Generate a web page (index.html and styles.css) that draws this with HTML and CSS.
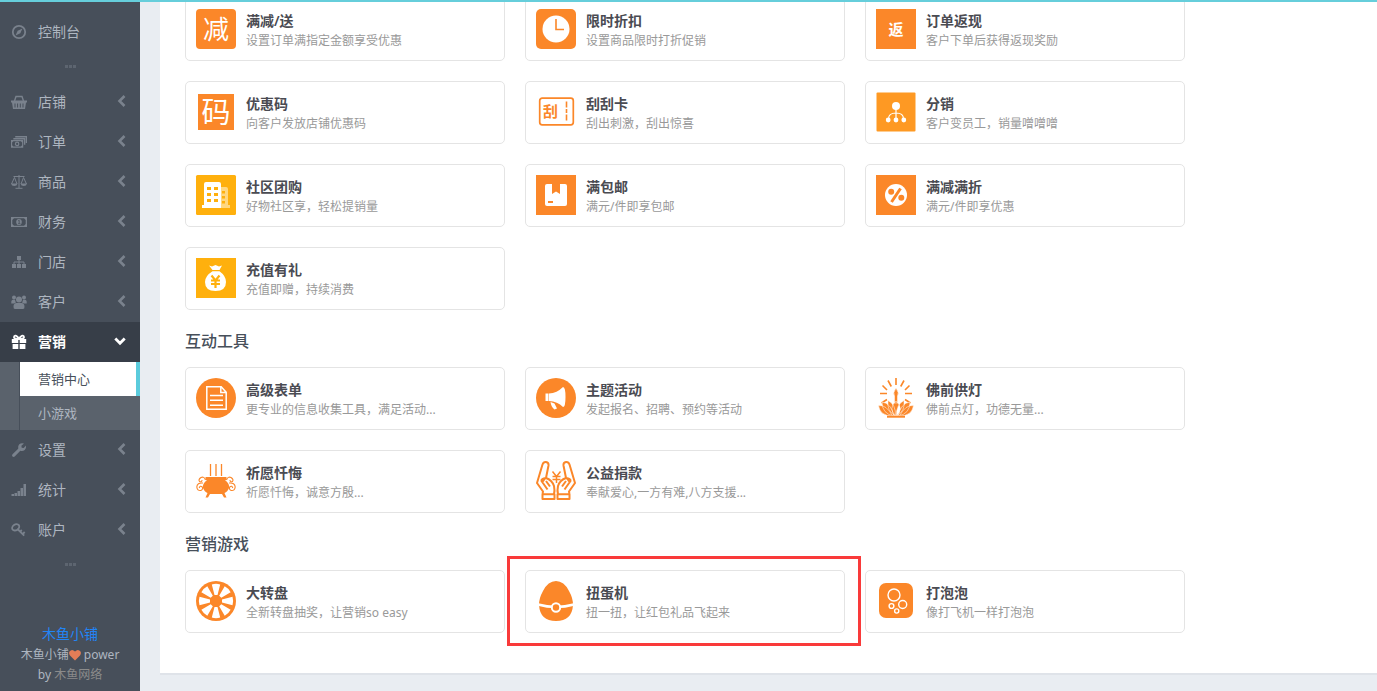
FILE: index.html
```html
<!DOCTYPE html>
<html lang="zh-CN">
<head>
<meta charset="utf-8">
<title>营销中心</title>
<meta name="viewport" content="width=device-width, initial-scale=1">
<link rel="stylesheet" href="styles.css">
</head>
<body>
<svg class="defs" aria-hidden="true">
  <symbol id="chevron-left" viewBox="0 0 12 14"><path d="M10.500 2 5.500 7l5 5" fill="none" stroke="currentColor" stroke-width="2.600"/></symbol>
  <symbol id="chevron-down" viewBox="0 0 12 14"><path d="M1.300 4.500 6 9.200l4.700-4.700" fill="none" stroke="currentColor" stroke-width="2.800"/></symbol>
</svg>
<div class="topbar"></div>
<div class="layout">
  <aside class="sidebar">
    <nav>
      <a class="nav-item" href="#"><svg class="nav-icon" viewBox="0 0 16 16"><circle cx="8" cy="8" r="6.200" fill="none" stroke="currentColor" stroke-width="1.800"/><path d="M11.500 4.500 9.300 9.300 4.500 11.500 6.700 6.700z" fill="currentColor"/></svg><span>控制台</span></a>
      <div class="divider"><i></i><i></i><i></i></div>
      <a class="nav-item" href="#"><svg class="nav-icon" viewBox="0 0 16 16"><path d="M3.500 7 5 2.500h6L12.500 7" fill="none" stroke="currentColor" stroke-width="1.400"/><path fill="currentColor" fill-rule="evenodd" d="M0 6.500h16v2h-1l-1 6.500H2L1 8.500H0zM3.500 9.500v4h1v-4zm2.600 0v4h1v-4zm2.700 0v4h1v-4zm2.700 0v4h1v-4z"/></svg><span>店铺</span><svg class="arrow"><use href="#chevron-left"/></svg></a>
      <a class="nav-item" href="#"><svg class="nav-icon" viewBox="0 0 17 16"><path d="M2.500 4.500H14.500V11M4.500 2.500h12V9" fill="none" stroke="currentColor" stroke-width="1.500"/><path fill="currentColor" fill-rule="evenodd" d="M0 6h13v8H0zM2.500 7.200 1.200 8.500v3L2.500 12.800h8l1.300-1.300v-3l-1.300-1.300z"/><circle cx="6.500" cy="10" r="1.800" fill="none" stroke="currentColor" stroke-width="1.300"/></svg><span>订单</span><svg class="arrow"><use href="#chevron-left"/></svg></a>
      <a class="nav-item" href="#"><svg class="nav-icon" viewBox="0 0 16 16"><path d="M8 1v13M2.500 2.500h11M4.500 14.300h7M.5 10 3.500 3.500 6 10M10 10l2.500-6.500 3 6.500" fill="none" stroke="currentColor"/><path d="M0 9.500h6.500Q6 12 3.250 12T0 9.500M9.500 9.500H16q-.5 2.500-3.250 2.500T9.500 9.500" fill="currentColor"/></svg><span>商品</span><svg class="arrow"><use href="#chevron-left"/></svg></a>
      <a class="nav-item" href="#"><svg class="nav-icon" viewBox="0 0 16 16"><path fill="currentColor" fill-rule="evenodd" d="M0 3h16v10H0zM3 4.300 1.300 6v4L3 11.700h10l1.700-1.700V6L13 4.300z"/><ellipse cx="8" cy="8" rx="2.800" ry="3.100" fill="currentColor"/><path d="M7.200 6.800 8.200 6.200v3.300M7 9.700h2.400" stroke="#474f5a" stroke-width=".8" fill="none"/></svg><span>财务</span><svg class="arrow"><use href="#chevron-left"/></svg></a>
      <a class="nav-item" href="#"><svg class="nav-icon" viewBox="0 0 16 16"><path fill="currentColor" d="M6 2h4v4H6zM1 10h4v4H1zM6 10h4v4H6zM11 10h4v4h-4z"/><path d="M8 6v4M3 10.500V8h10v2.500" fill="none" stroke="currentColor"/></svg><span>门店</span><svg class="arrow"><use href="#chevron-left"/></svg></a>
      <a class="nav-item" href="#"><svg class="nav-icon" viewBox="0 0 16 16"><g fill="currentColor"><circle cx="3" cy="3.500" r="2"/><circle cx="13" cy="3.500" r="2"/><circle cx="8" cy="5.500" r="3"/><path d="M.3 9.500Q0 5.800 2 5.800h2Q4.500 8 5 8.500L3 9.500zM15.700 9.500Q16 5.800 14 5.800h-2Q11.500 8 11 8.500l2 1zM4 15q-1.700 0-1.500-2.500Q2.600 9 5.500 9h5q2.900 0 3 3.500.2 2.500-1.500 2.500z"/></g></svg><span>客户</span><svg class="arrow"><use href="#chevron-left"/></svg></a>
      <a class="nav-item current" href="#"><svg class="nav-icon" viewBox="0 0 16 16"><path d="M8 5Q6 1.500 4.200 1.700 2.800 2 3 3.500 3.400 5 8 5q4.600 0 5-1.500.2-1.500-1.200-1.800Q10 1.500 8 5" fill="none" stroke="currentColor" stroke-width="1.800"/><path d="M.8 5h6.500v4H.8zM8.700 5h6.500v4H8.700zM1.600 10h5.700v5H1.600zM8.700 10h5.700v5H8.700z" fill="currentColor"/></svg><span>营销</span><svg class="arrow"><use href="#chevron-down"/></svg></a>
      <div class="submenu">
        <a class="active" href="#">营销中心</a>
        <a href="#">小游戏</a>
      </div>
      <a class="nav-item" href="#"><svg class="nav-icon" viewBox="0 0 16 16"><path fill="currentColor" d="M1.500 12.300 7.200 6.700Q6.500 4 8.300 2.200 10.300.6 13 1.500L10.400 3.800l.3 1.900 2 .3L15 3.500q.5 3-1.300 4.500-1.800 1.600-4.400.8L3.700 14.500Q2.500 15.400 1.500 14.500T1.500 12.300"/></svg><span>设置</span><svg class="arrow"><use href="#chevron-left"/></svg></a>
      <a class="nav-item" href="#"><svg class="nav-icon" viewBox="0 0 16 16"><path fill="currentColor" d="M.500 12h2.500v2H.500zM3.500 11H6v3H3.500zM6.500 9H9v5H6.500zM9.500 6H12v8H9.500zM12.500 2H15v12h-2.500z"/></svg><span>统计</span><svg class="arrow"><use href="#chevron-left"/></svg></a>
      <a class="nav-item" href="#"><svg class="nav-icon" viewBox="0 0 16 16"><ellipse cx="4.700" cy="5.300" rx="3.800" ry="2.900" transform="rotate(-35 4.700 5.300)" fill="none" stroke="currentColor" stroke-width="1.800"/><path d="m6.500 7 6.700 6.700M9 9.800l1.800-1.800M11.500 12.200l2.200-2.200" fill="none" stroke="currentColor" stroke-width="1.800"/></svg><span>账户</span><svg class="arrow"><use href="#chevron-left"/></svg></a>
      <div class="divider"><i></i><i></i><i></i></div>
    </nav>
    <footer class="credits">
      <a class="brand" href="#">木鱼小铺</a>
      <p>木鱼小铺<svg class="heart" viewBox="0 0 12 12"><path fill="currentColor" d="M6 11.500 1 6.500Q-.5 4.500.5 2.500 3-.5 6 2.500 9-.5 11.500 2.500q1 2-.5 4z"/></svg> power by <a href="#">木鱼网络</a></p>
    </footer>
  </aside>

  <main class="main">
    <div class="panel">
      <section class="cards scrolled">
        <a class="card" href="#"><svg class="icon" viewBox="0 0 40 40"><rect width="40" height="40" rx="4" fill="#fb8729"/><text class="glyph" x="20" y="30" font-size="26">减</text></svg><div><h3>满减/送</h3><p>设置订单满指定金额享受优惠</p></div></a>
        <a class="card" href="#"><svg class="icon" viewBox="0 0 40 40"><rect width="40" height="40" rx="5" fill="#fb8729"/><circle cx="20" cy="20" r="13.500" fill="#fff"/><path d="M20 10v10.500h8" fill="none" stroke="#fb8729" stroke-width="1.600"/></svg><div><h3>限时折扣</h3><p>设置商品限时打折促销</p></div></a>
        <a class="card" href="#"><svg class="icon" viewBox="0 0 40 40"><rect width="40" height="40" fill="#fb8729"/><text class="glyph strong" x="20" y="26" font-size="15">返</text></svg><div><h3>订单返现</h3><p>客户下单后获得返现奖励</p></div></a>

        <a class="card" href="#"><svg class="icon" viewBox="0 0 40 40"><rect x="2" y="2" width="36" height="36" fill="#fb8729"/><text class="glyph" x="20" y="31" font-size="29">码</text></svg><div><h3>优惠码</h3><p>向客户发放店铺优惠码</p></div></a>
        <a class="card" href="#"><svg class="icon" viewBox="0 0 40 40"><rect x="3.700" y="6.200" width="33.600" height="26.600" rx="2.500" fill="none" stroke="#fb8729" stroke-width="1.700"/><path d="M30.500 9.500v20.500" stroke="#fb8729" stroke-width="1.600" stroke-dasharray="6 1.500 4 1.500"/><text class="glyph strong orange" x="14.500" y="25" font-size="15">刮</text></svg><div><h3>刮刮卡</h3><p>刮出刺激，刮出惊喜</p></div></a>
        <a class="card" href="#"><svg class="icon" viewBox="0 0 40 40"><rect x=".5" y=".5" width="39" height="39" rx="1" fill="#fe9923"/><circle cx="20" cy="14" r="4" fill="#fff"/><path d="M20 17v10M12.500 27q0-6 7.500-6t7.500 6" fill="none" stroke="#fff" stroke-width="1.200"/><g fill="#fff"><circle cx="12.200" cy="28" r="2.400"/><circle cx="20" cy="28" r="2.400"/><circle cx="27.800" cy="28" r="2.400"/></g></svg><div><h3>分销</h3><p>客户变员工，销量噌噌噌</p></div></a>

        <a class="card" href="#"><svg class="icon" viewBox="0 0 40 40"><rect width="40" height="40" rx="1.500" fill="#ffb00d"/><path d="M24 12h6q2 0 2 2v16h2v3H24z" fill="#ffd780"/><path d="M6 30h2V9q0-2 2-2h13q2 0 2 2v24H6z" fill="#fff"/><path fill="#ffb00d" d="M11 12h4v3h-4zM18 12h4v3h-4zM11 18h4v3h-4zM18 18h4v3h-4zM11 24h4v3h-4zM18 24h4v3h-4zM26 16h3v2.500h-3zM26 21h3v2.500h-3zM26 26h3v2.500h-3z"/></svg><div><h3>社区团购</h3><p>好物社区享，轻松提销量</p></div></a>
        <a class="card" href="#"><svg class="icon" viewBox="0 0 40 40"><rect width="40" height="40" fill="#fb8729"/><rect x="9" y="9" width="22" height="22" rx="2" fill="#fff"/><path d="M16 9h8v10l-4-2.500-4 2.500zM12 26h5v2h-5z" fill="#fb8729"/></svg><div><h3>满包邮</h3><p>满元/件即享包邮</p></div></a>
        <a class="card" href="#"><svg class="icon" viewBox="0 0 40 40"><rect width="40" height="40" fill="#fb8729"/><circle cx="20" cy="20" r="11" fill="#fff"/><path d="m15.500 27 9-13.500" stroke="#fb8729" stroke-width="3"/><circle cx="15.200" cy="16.800" r="3" fill="#fb8729"/><circle cx="25.300" cy="22.800" r="3" fill="#fb8729"/></svg><div><h3>满减满折</h3><p>满元/件即享优惠</p></div></a>

        <a class="card" href="#"><svg class="icon" viewBox="0 0 40 40"><rect width="40" height="40" fill="#ffb00d"/><path d="M13 7.500 16 8.500 19.500 7 23 8.500 26 7.500 23.500 12h-7zM16.500 13.300h7Q30 18 30 24q0 9-10.500 9T9 24q0-6 7.500-10.700" fill="#fff"/><path d="m15.500 17.500 4 5 4-5M15 22.500h9M15 26h9M19.500 22v8" fill="none" stroke="#ffb00d" stroke-width="2.200"/></svg><div><h3>充值有礼</h3><p>充值即赠，持续消费</p></div></a>
      </section>

      <h2>互动工具</h2>
      <section class="cards">
        <a class="card" href="#"><svg class="icon" viewBox="0 0 40 40"><circle cx="20" cy="20" r="20" fill="#fb8729"/><path d="M10.800 8.800h14.400l5 5.400v17H10.800zM24.800 9v5.500h5.400M14 17.500h13M14 22.300h13M14 27.200h13" fill="none" stroke="#fff" stroke-width="1.500"/></svg><div><h3>高级表单</h3><p>更专业的信息收集工具，满足活动...</p></div></a>
        <a class="card" href="#"><svg class="icon" viewBox="0 0 40 40"><circle cx="20" cy="20" r="20" fill="#fb8729"/><path d="M9.500 15.500h3v7.500h-3zM13 15.500q8-.5 14-6.500 2.500 0 2.500 10T27 29q-5.500-5.500-14-6zM14.500 24l4 1.500 2.500 5-2.500 1q-3.500-3-4-7.500" fill="#fff"/></svg><div><h3>主题活动</h3><p>发起报名、招聘、预约等活动</p></div></a>
        <a class="card" href="#"><svg class="icon" viewBox="0 0 40 40"><g fill="none" stroke="#fb8729" stroke-width="1.600"><path d="M20 0v7M12 2.500l3.300 6M28 2.500l-3.300 6M6.500 7.500 11 12M33.500 7.500 29 12M4 15.500h7M36 15.500h-7M5.500 25l5.500-3.500M34.500 25 29 21.500"/></g><g fill="#fb8729" stroke="#fff" stroke-width=".5"><path d="M20 10q3.500 5 1.500 8v7h-3v-7q-2-3 1.500-8M2.500 27.500q8-1 14 10.500Q4 38 2.500 27.500M37.500 27.500q-8-1-14 10.500 12.500 0 14-10.500M6 24q9 1 12 14-12-2-12-14M34 24q-9 1-12 14 12-2 12-14M12 22.500q8 4 7.500 15.500-9-5-7.500-15.500M28 22.500q-8 4-7.500 15.500 9-5 7.500-15.500M20 23q8.500 8 0 15-8.500-7 0-15"/></g><path d="M11 38.700h18" stroke="#fb8729" stroke-width="2"/></svg><div><h3>佛前供灯</h3><p>佛前点灯，功德无量...</p></div></a>

        <a class="card" href="#"><svg class="icon" viewBox="0 0 40 40"><path d="M14.500 3v12M20 3v12M25.500 3v12" stroke="#fb8729" stroke-width="1.300"/><path d="M9.500 16h21v3H29q5 4 4 8-1.500 4-4.500 5l2 4.500h-2.500L26 33H14l-2 3.500H9.500l2-4.500Q8.500 31 7 27q-1-4 4-8H9.500z" fill="#fb8729"/><g fill="none" stroke="#fb8729" stroke-width="1.100"><path id="swirl" d="M9.500 19Q8 15 5 16.500 2 18.500 3.500 20.500 6 21.500 6 19M7 22Q1 21.500.8 26q.5 4 4 3.500 2.500-1 1.500-3.500Q4 24 3.200 27"/><use href="#swirl" transform="matrix(-1 0 0 1 40 0)"/></g></svg><div><h3>祈愿忏悔</h3><p>祈愿忏悔，诚意方殷...</p></div></a>
        <a class="card" href="#"><svg class="icon" viewBox="0 0 40 40"><g id="hand" fill="none" stroke="#fb8729" stroke-width="2" stroke-linejoin="round"><path d="M6.500 33 7 30.500 1 22 6.500 3.500Q7.500.7 10 1q3 .5 2.500 3.500L10 17M10 17Q5 17.500 5.500 20l6 8.500M10 17q6 2 8 8 1 5 0 8M6.500 33.200h12v4.700h-12zM6 21.500 9 17.500"/><path d="m10 20 4 5.500"/></g><use href="#hand" transform="matrix(-1 0 0 1 40 0)"/><path d="m16.500 10.500 4 5 4-5M16.500 15.500h8M16.500 18.500h8M20.500 15v7" fill="none" stroke="#fb8729" stroke-width="1.500"/></svg><div><h3>公益捐款</h3><p>奉献爱心,一方有难,八方支援...</p></div></a>
      </section>

      <h2>营销游戏</h2>
      <section class="cards">
        <a class="card" href="#"><svg class="icon" viewBox="0 0 40 40"><circle cx="20" cy="20" r="20" fill="#fb8729"/><path id="wedges" fill="#fff" d="M15.800 3.500Q20 2.200 24.200 3.500L21.500 14h-3zM15.800 36.500Q20 37.800 24.200 36.500L21.500 26h-3zM3.500 15.800Q2.200 20 3.500 24.200L14 21.500v-3zM36.500 15.800Q37.800 20 36.500 24.200L26 21.500v-3z"/><use href="#wedges" transform="rotate(45 20 20)"/></svg><div><h3>大转盘</h3><p>全新转盘抽奖，让营销so easy</p></div></a>
        <a class="card highlighted" href="#"><svg class="icon" viewBox="0 0 40 40"><path d="M20 0Q28 0 33 10q4 7 4 14-1 16-17 16T3 24q0-7 4-14Q12 0 20 0" fill="#fb8729"/><path d="M2 23.500Q20 28.500 38 23.500" fill="none" stroke="#fff" stroke-width="2.600"/><circle cx="20" cy="26.500" r="4.200" fill="#fb8729" stroke="#fff" stroke-width="2"/></svg><div><h3>扭蛋机</h3><p>扭一扭，让红包礼品飞起来</p></div><span class="marker"></span></a>
        <a class="card" href="#"><svg class="icon" viewBox="0 0 40 40"><rect x="3" y="2" width="34" height="35" rx="7" fill="#fb8729"/><g fill="none" stroke="#fff" stroke-width="1.400"><circle cx="18" cy="14" r="6"/><circle cx="26.700" cy="23.500" r="4"/><circle cx="15.500" cy="25" r="2.400"/><circle cx="20.700" cy="30" r="2.100"/></g></svg><div><h3>打泡泡</h3><p>像打飞机一样打泡泡</p></div></a>
      </section>
    </div>
  </main>
</div>
</body>
</html>
```
FILE: styles.css
```css
* { box-sizing: border-box; }

body {
  margin: 0;
  background: #e9edf2;
  color: #474f5a;
  font-family: "Noto Sans", "Noto Sans CJK SC", sans-serif;
  font-size: 14px;
}

a { color: inherit; text-decoration: none; }
h2, h3, p { margin: 0; }

.defs { position: absolute; width: 0; height: 0; }

.topbar { height: 2px; background: #66cedb; }

.layout { display: flex; min-height: calc(100vh - 2px); }

.sidebar {
  flex: 0 0 140px;
  padding-top: 10px;
  background: #474f5a;
  color: #aeb6c0;
}

.nav-item {
  display: flex;
  align-items: center;
  height: 40px;
  padding: 0 14px 2px 11px;
}

.nav-icon { width: 16px; height: 16px; margin: 2px 11px 0 0; color: #7a828d; }
.nav-item span { flex: 1; }
.arrow { width: 12px; height: 14px; color: #7a828d; }

.current { background: #373e48; color: #fff; font-weight: bold; }
.current .nav-icon, .current .arrow { color: #fff; }

.divider {
  display: flex;
  justify-content: center;
  align-items: center;
  gap: 1px;
  height: 30px;
  padding-bottom: 2px;
}
.divider i { width: 3px; height: 3px; background: #5d6570; }

.submenu {
  padding-left: 19px;
  background: #5a626c;
  font-size: 13px;
}
.submenu a {
  display: block;
  padding-left: 18px;
  border-left: 1px solid #474f5a;
  line-height: 34px;
}
.submenu .active {
  background: #fff;
  border-right: 4px solid #5bcbdc;
  color: #474f5a;
}

.credits {
  padding: 44px 16px 0;
  font-size: 12px;
  line-height: 20px;
  text-align: center;
}
.brand { display: block; color: #2284f5; font-size: 14px; }
.credits p { padding-top: 1px; }
.credits p a { color: #8b8b8b; }
.heart { width: 12px; height: 12px; color: #e37d57; vertical-align: -2px; }

.main { flex: 1; padding-left: 20px; overflow: hidden; }

.panel {
  padding: 0 0 40px 25px;
  background: #fff;
  border-bottom: 2px solid #dfe3e9;
}

.panel h2 {
  padding: 20px 0 15px;
  font-size: 16px;
  font-weight: 500;
  line-height: 22px;
}

.cards {
  display: grid;
  grid-template-columns: repeat(auto-fill, 320px);
  gap: 20px;
}
.scrolled { margin-top: -4px; }

.card {
  position: relative;
  display: flex;
  gap: 10px;
  padding: 10px 10px 11px;
  border: 1px solid #e4e4e4;
  border-radius: 5px;
}
.card h3 { color: #4a4b52; font-size: 14px; font-weight: 600; line-height: 24px; }
.card p { color: #999; font-size: 12px; line-height: 16px; }

.icon { width: 40px; height: 40px; overflow: visible; }
.glyph { fill: #fff; font-family: "Noto Sans CJK SC", sans-serif; text-anchor: middle; }
.strong { font-weight: bold; }
.orange { fill: #fb8729; }

.marker {
  position: absolute;
  inset: -15px -17px -14px -19px;
  border: 3px solid #f93a3a;
}
```
